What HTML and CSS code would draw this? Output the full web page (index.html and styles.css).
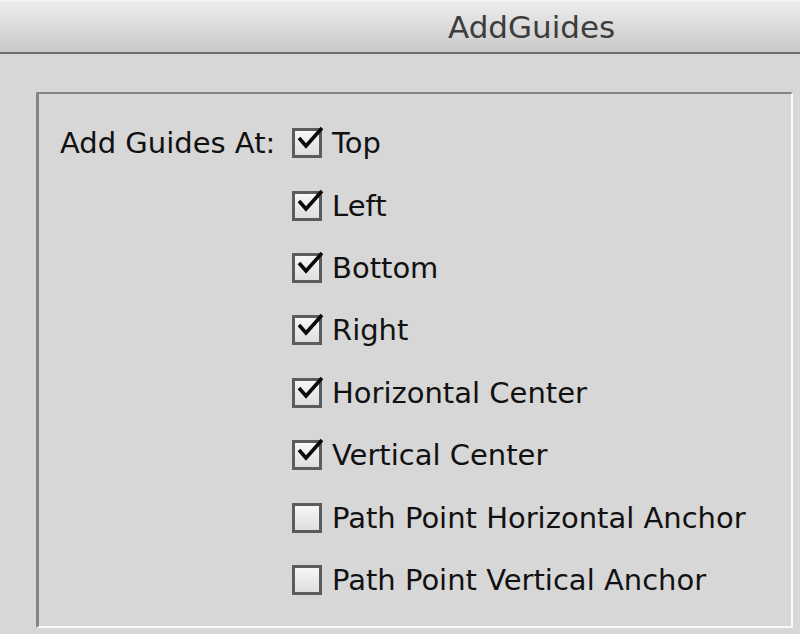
FILE: index.html
```html
<!DOCTYPE html>
<html>
<head>
<meta charset="utf-8">
<link rel="stylesheet" href="styles.css">
</head>
<body>
<div class="titlebar"><span class="title">AddGuides</span></div>
<div class="panel">
  <div class="label">Add Guides At:</div>
  <div class="options">
    <div class="opt"><span class="box"><svg viewBox="0 0 40 40" class="tick"><path d="M7 10 L14 18 L30 0"/></svg></span><span class="txt">Top</span></div>
    <div class="opt"><span class="box"><svg viewBox="0 0 40 40" class="tick"><path d="M7 10 L14 18 L30 0"/></svg></span><span class="txt">Left</span></div>
    <div class="opt"><span class="box"><svg viewBox="0 0 40 40" class="tick"><path d="M7 10 L14 18 L30 0"/></svg></span><span class="txt">Bottom</span></div>
    <div class="opt"><span class="box"><svg viewBox="0 0 40 40" class="tick"><path d="M7 10 L14 18 L30 0"/></svg></span><span class="txt">Right</span></div>
    <div class="opt"><span class="box"><svg viewBox="0 0 40 40" class="tick"><path d="M7 10 L14 18 L30 0"/></svg></span><span class="txt">Horizontal Center</span></div>
    <div class="opt"><span class="box"><svg viewBox="0 0 40 40" class="tick"><path d="M7 10 L14 18 L30 0"/></svg></span><span class="txt">Vertical Center</span></div>
    <div class="opt"><span class="box"></span><span class="txt">Path Point Horizontal Anchor</span></div>
    <div class="opt"><span class="box"></span><span class="txt">Path Point Vertical Anchor</span></div>
  </div>
</div>
</body>
</html>
```
FILE: styles.css
```css
html, body {
  margin: 0;
  padding: 0;
}
body {
  width: 800px;
  height: 634px;
  overflow: hidden;
  background: #d7d7d7;
  font-family: "DejaVu Sans", Verdana, sans-serif;
  color: #111;
}
.titlebar {
  height: 52px;
  border-bottom: 2px solid #6c6c6c;
  border-top: 1px solid #f4f4f4;
  box-sizing: border-box;
  height: 54px;
  background: linear-gradient(#ececec 0%, #dedede 45%, #c8c8c8 100%);
  display: flex;
  align-items: flex-start;
  padding: 8px 0 0 448px;
}
.title {
  font-size: 31px;
  line-height: 36px;
  color: #3d3d3d;
}
.panel {
  margin: 38px 0 0 36px;
  width: 757px;
  height: 536px;
  border-top: 2px solid #858585;
  border-left: 3px solid #858585;
  border-right: 2px solid #fafafa;
  border-bottom: 2px solid #fafafa;
  display: flex;
  padding: 18px 0 0 21px;
  box-sizing: border-box;
}
.label {
  width: 232px;
  height: 62.4px;
  display: flex;
  align-items: center;
  font-size: 29px;
  flex: none;
  white-space: nowrap;
}
.options {
  display: flex;
  flex-direction: column;
}
.opt {
  height: 62.4px;
  display: flex;
  align-items: center;
  gap: 10px;
}
.box {
  position: relative;
  width: 30px;
  height: 30px;
  box-sizing: border-box;
  border: 3px solid #5c5c5c;
  background: linear-gradient(#f7f7f7, #dedede);
  flex: none;
}
.tick {
  position: absolute;
  left: -3px;
  top: -3px;
  width: 40px;
  height: 40px;
  overflow: visible;
}
.tick path {
  fill: none;
  stroke: #0a0a0a;
  stroke-width: 3.6;
  stroke-linecap: butt;
  stroke-linejoin: miter;
}
.txt {
  font-size: 29px;
  white-space: nowrap;
}
```
